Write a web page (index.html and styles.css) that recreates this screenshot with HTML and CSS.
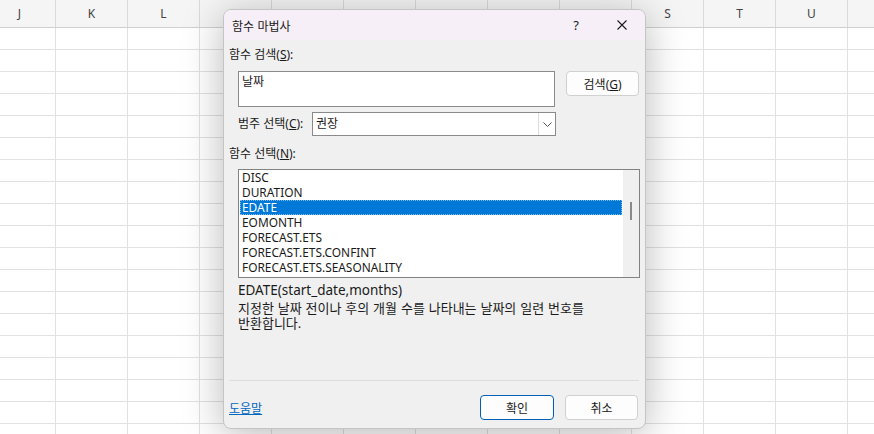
FILE: index.html
```html
<!DOCTYPE html>
<html lang="ko">
<head>
    <meta charset="UTF-8">
    <meta name="viewport" content="width=device-width, initial-scale=1.0">
    <title>함수 마법사</title>
    <link rel="stylesheet" href="styles.css">
</head>
<body>
    <div class="sheet">
        <div class="col-headers">
            <div class="col">J</div>
            <div class="col">K</div>
            <div class="col">L</div>
            <div class="col">M</div>
            <div class="col">N</div>
            <div class="col">O</div>
            <div class="col">P</div>
            <div class="col">Q</div>
            <div class="col">R</div>
            <div class="col">S</div>
            <div class="col">T</div>
            <div class="col">U</div>
            <div class="col"></div>
        </div>
        <div class="cells"></div>
    </div>

    <div class="dialog">
        <div class="titlebar">
            <span class="title">함수 마법사</span>
            <span class="title-btn">?</span>
            <span class="title-btn">
                <svg width="10" height="10" viewBox="0 0 10 10">
                    <path d="M0.5 0.5 L9.5 9.5 M9.5 0.5 L0.5 9.5" stroke="#1a1a1a" stroke-width="1.1" fill="none"/>
                </svg>
            </span>
        </div>

        <div class="body">
            <div class="label">함수 검색(<u>S</u>):</div>
            <div class="search-row">
                <div class="search-box">날짜</div>
                <button class="btn">검색(<u>G</u>)</button>
            </div>

            <div class="category-row">
                <span class="label">범주 선택(<u>C</u>):</span>
                <div class="select">
                    <span class="select-value">권장</span>
                    <span class="select-arrow">
                        <svg width="9" height="5" viewBox="0 0 9 5">
                            <path d="M0.5 0.5 L4.5 4.5 L8.5 0.5" stroke="#555" stroke-width="1" fill="none"/>
                        </svg>
                    </span>
                </div>
            </div>

            <div class="label list-label">함수 선택(<u>N</u>):</div>
            <div class="listbox">
                <ul class="items">
                    <li>DISC</li>
                    <li>DURATION</li>
                    <li class="selected">EDATE</li>
                    <li>EOMONTH</li>
                    <li>FORECAST.ETS</li>
                    <li>FORECAST.ETS.CONFINT</li>
                    <li>FORECAST.ETS.SEASONALITY</li>
                </ul>
                <div class="scrollbar"><div class="thumb"></div></div>
            </div>

            <div class="syntax">EDATE(start_date,months)</div>
            <div class="desc">지정한 날짜 전이나 후의 개월 수를 나타내는 날짜의 일련 번호를<br>반환합니다.</div>
        </div>

        <div class="footer">
            <a class="help-link" href="#">도움말</a>
            <button class="btn primary">확인</button>
            <button class="btn">취소</button>
        </div>
    </div>
</body>
</html>
```

FILE: styles.css
```css
body {
    margin: 0;
    width: 874px;
    height: 434px;
    overflow: hidden;
    background: #fff;
    font-family: "Noto Sans", "Noto Sans CJK KR", sans-serif;
    font-size: 12px;
    color: #1a1a1a;
}
.sheet {
    display: flex;
    flex-direction: column;
    height: 100%;
    overflow: hidden;
}
.col-headers {
    display: flex;
    height: 28px;
    margin-left: -16px;
    background: #f5f5f5;
    border-bottom: 1px solid #d0d0d0;
    box-sizing: border-box;
}
.col {
    flex: 0 0 72px;
    box-sizing: border-box;
    border-right: 1px solid #dadada;
    display: flex;
    align-items: center;
    justify-content: center;
    color: #444;
    font-size: 12px;
}
.cells {
    flex: 1;
    background-image:
        repeating-linear-gradient(to bottom, transparent 0 21px, #e1e1e1 21px 22px),
        repeating-linear-gradient(to right, transparent 0 71px, #e1e1e1 71px 72px);
    background-position: 0 0, -16px 0;
}

/* dialog sits over the sheet */
.dialog {
    position: absolute;
    left: 223px;
    top: 9px;
    width: 423px;
    height: 420px;
    box-sizing: border-box;
    display: flex;
    flex-direction: column;
    background: #f0f0f0;
    border: 1px solid #c4c4c4;
    border-radius: 8px;
    box-shadow: 0 6px 40px rgba(0, 0, 0, 0.28);
    overflow: hidden;
}
.titlebar {
    display: flex;
    align-items: center;
    height: 30px;
    background: #f6eff8;
    flex-shrink: 0;
}
.title {
    flex: 1;
    padding-left: 8px;
    font-family: "Noto Sans CJK KR", sans-serif;
    font-size: 12px;
}
.title-btn {
    width: 46px;
    display: flex;
    justify-content: center;
    align-items: center;
    font-size: 13px;
}
.body {
    flex: 1;
    padding: 7px 6px 0 5px;
}
.label {
    line-height: 16px;
}
.search-row {
    display: flex;
    align-items: flex-start;
    margin: 8px 0 0 9px;
}
.search-box {
    width: 318px;
    height: 36px;
    box-sizing: border-box;
    background: #fff;
    border: 1px solid #8a8a8a;
    padding: 2px 3px;
    line-height: 16px;
}
.btn {
    width: 73px;
    height: 25px;
    box-sizing: border-box;
    margin-left: 11px;
    background: #fdfdfd;
    border: 1px solid #d0d0d0;
    border-radius: 4px;
    font-family: "Noto Sans", "Noto Sans CJK KR", sans-serif;
    font-size: 12px;
    color: #1a1a1a;
    padding: 0;
}
.btn.primary {
    width: 74px;
    border-color: #005fb8;
}
.category-row {
    display: flex;
    justify-content: space-between;
    align-items: center;
    width: 318px;
    margin: 5px 0 0 9px;
}
.select {
    width: 244px;
    height: 24px;
    box-sizing: border-box;
    display: flex;
    background: #fff;
    border: 1px solid #8a8a8a;
}
.select-value {
    flex: 1;
    padding-left: 3px;
    line-height: 22px;
}
.select-arrow {
    width: 16px;
    display: flex;
    align-items: center;
    justify-content: center;
    border-left: 1px solid #dcdcdc;
}
.list-label {
    margin-top: 10px;
}
.listbox {
    display: flex;
    width: 402px;
    height: 109px;
    box-sizing: border-box;
    margin: 7px 0 0 9px;
    background: #fff;
    border: 1px solid #828282;
}
.items {
    flex: 1;
    list-style: none;
    margin: 0;
    padding: 0 1px;
    font-size: 11.9px;
}
.items li {
    line-height: 15px;
    padding-left: 2px;
}
.items li.selected {
    background: #0078d7;
    color: #fff;
    outline: 1px dotted #7fb8ea;
    outline-offset: -1px;
}
.scrollbar {
    width: 16px;
    background: #f0f0f0;
    position: relative;
}
.thumb {
    position: absolute;
    left: 7px;
    top: 32px;
    width: 2px;
    height: 18px;
    background: #8a8a8a;
}
.syntax {
    margin: 4px 0 0 9px;
    line-height: 16px;
    font-size: 13.5px;
}
.desc {
    margin: 3px 0 0 9px;
    line-height: 15px;
    font-size: 13px;
    word-spacing: 0.5px;
}
.footer {
    display: flex;
    align-items: center;
    margin: 0 6px 0 5px;
    padding: 14px 1px 8px 0;
    border-top: 1px solid #dcdcdc;
}
.help-link {
    flex: 1;
    color: #0067c0;
    text-decoration: underline;
    font-family: "Noto Sans CJK KR", sans-serif;
}
.footer .btn.primary {
    margin-left: 0;
}
```
